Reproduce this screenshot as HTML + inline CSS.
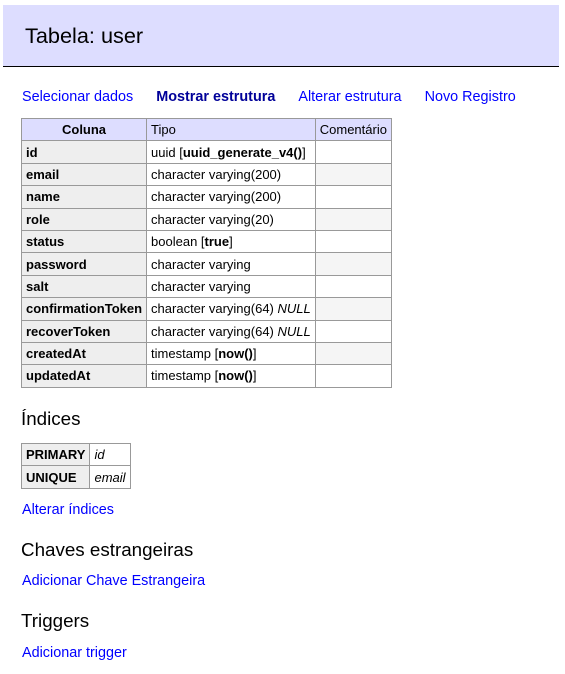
<!DOCTYPE html>
<html><head><meta charset="utf-8"><style>
body{margin:0;font-family:"Liberation Sans",sans-serif;background:#fff;color:#000;width:565px;height:674px;overflow:hidden;position:relative}
#h{position:absolute;left:3px;top:5px;width:556px;height:61px;background:#ddf;border-bottom:1px solid #000}
#h div{position:absolute;left:22px;top:18px;font-size:21.7px}
a{color:#00f;text-decoration:none}
.p{position:absolute;left:22px;font-size:14.4px;white-space:nowrap}
.h2{position:absolute;left:21px;font-size:18.8px}
table{border-collapse:collapse;position:absolute;left:21px;font-size:13px}
td,th{border:1px solid #999;padding:0 4px;height:21.4px;text-align:left;white-space:nowrap}
th{background:#eee;font-weight:bold}
thead th{background:#ddf;font-weight:normal}
tr.o td{background:#f5f5f5}
</style></head><body>
<div id="h"><div>Tabela: user</div></div>
<div class="p" style="top:89px"><a href="#">Selecionar dados</a><b style="color:#009;margin-left:23px">Mostrar estrutura</b><a href="#" style="margin-left:23px">Alterar estrutura</a><a href="#" style="margin-left:23px">Novo Registro</a></div>
<table style="top:118px">
<thead><tr><th style="text-align:center;font-weight:bold;width:116px">Coluna</th><th style="width:158px">Tipo</th><th>Comentário</th></tr></thead>
<tr><th>id</th><td>uuid [<b>uuid_generate_v4()</b>]</td><td></td></tr>
<tr class="o"><th>email</th><td style="background:#fff">character varying(200)</td><td></td></tr>
<tr><th>name</th><td>character varying(200)</td><td></td></tr>
<tr class="o"><th>role</th><td style="background:#fff">character varying(20)</td><td></td></tr>
<tr><th>status</th><td>boolean [<b>true</b>]</td><td></td></tr>
<tr class="o"><th>password</th><td style="background:#fff">character varying</td><td></td></tr>
<tr><th>salt</th><td>character varying</td><td></td></tr>
<tr class="o"><th>confirmationToken</th><td style="background:#fff">character varying(64) <i>NULL</i></td><td></td></tr>
<tr><th>recoverToken</th><td>character varying(64) <i>NULL</i></td><td></td></tr>
<tr class="o"><th>createdAt</th><td style="background:#fff">timestamp [<b>now()</b>]</td><td></td></tr>
<tr><th>updatedAt</th><td>timestamp [<b>now()</b>]</td><td></td></tr>
</table>
<div class="h2" style="top:408px">Índices</div>
<table style="top:443px">
<tr><th>PRIMARY</th><td style="width:31px"><i>id</i></td></tr>
<tr><th>UNIQUE</th><td><i>email</i></td></tr>
</table>
<div class="p" style="top:502px"><a href="#">Alterar índices</a></div>
<div class="h2" style="top:539px">Chaves estrangeiras</div>
<div class="p" style="top:573px"><a href="#">Adicionar Chave Estrangeira</a></div>
<div class="h2" style="top:610px">Triggers</div>
<div class="p" style="top:645px"><a href="#">Adicionar trigger</a></div>
</body></html>
